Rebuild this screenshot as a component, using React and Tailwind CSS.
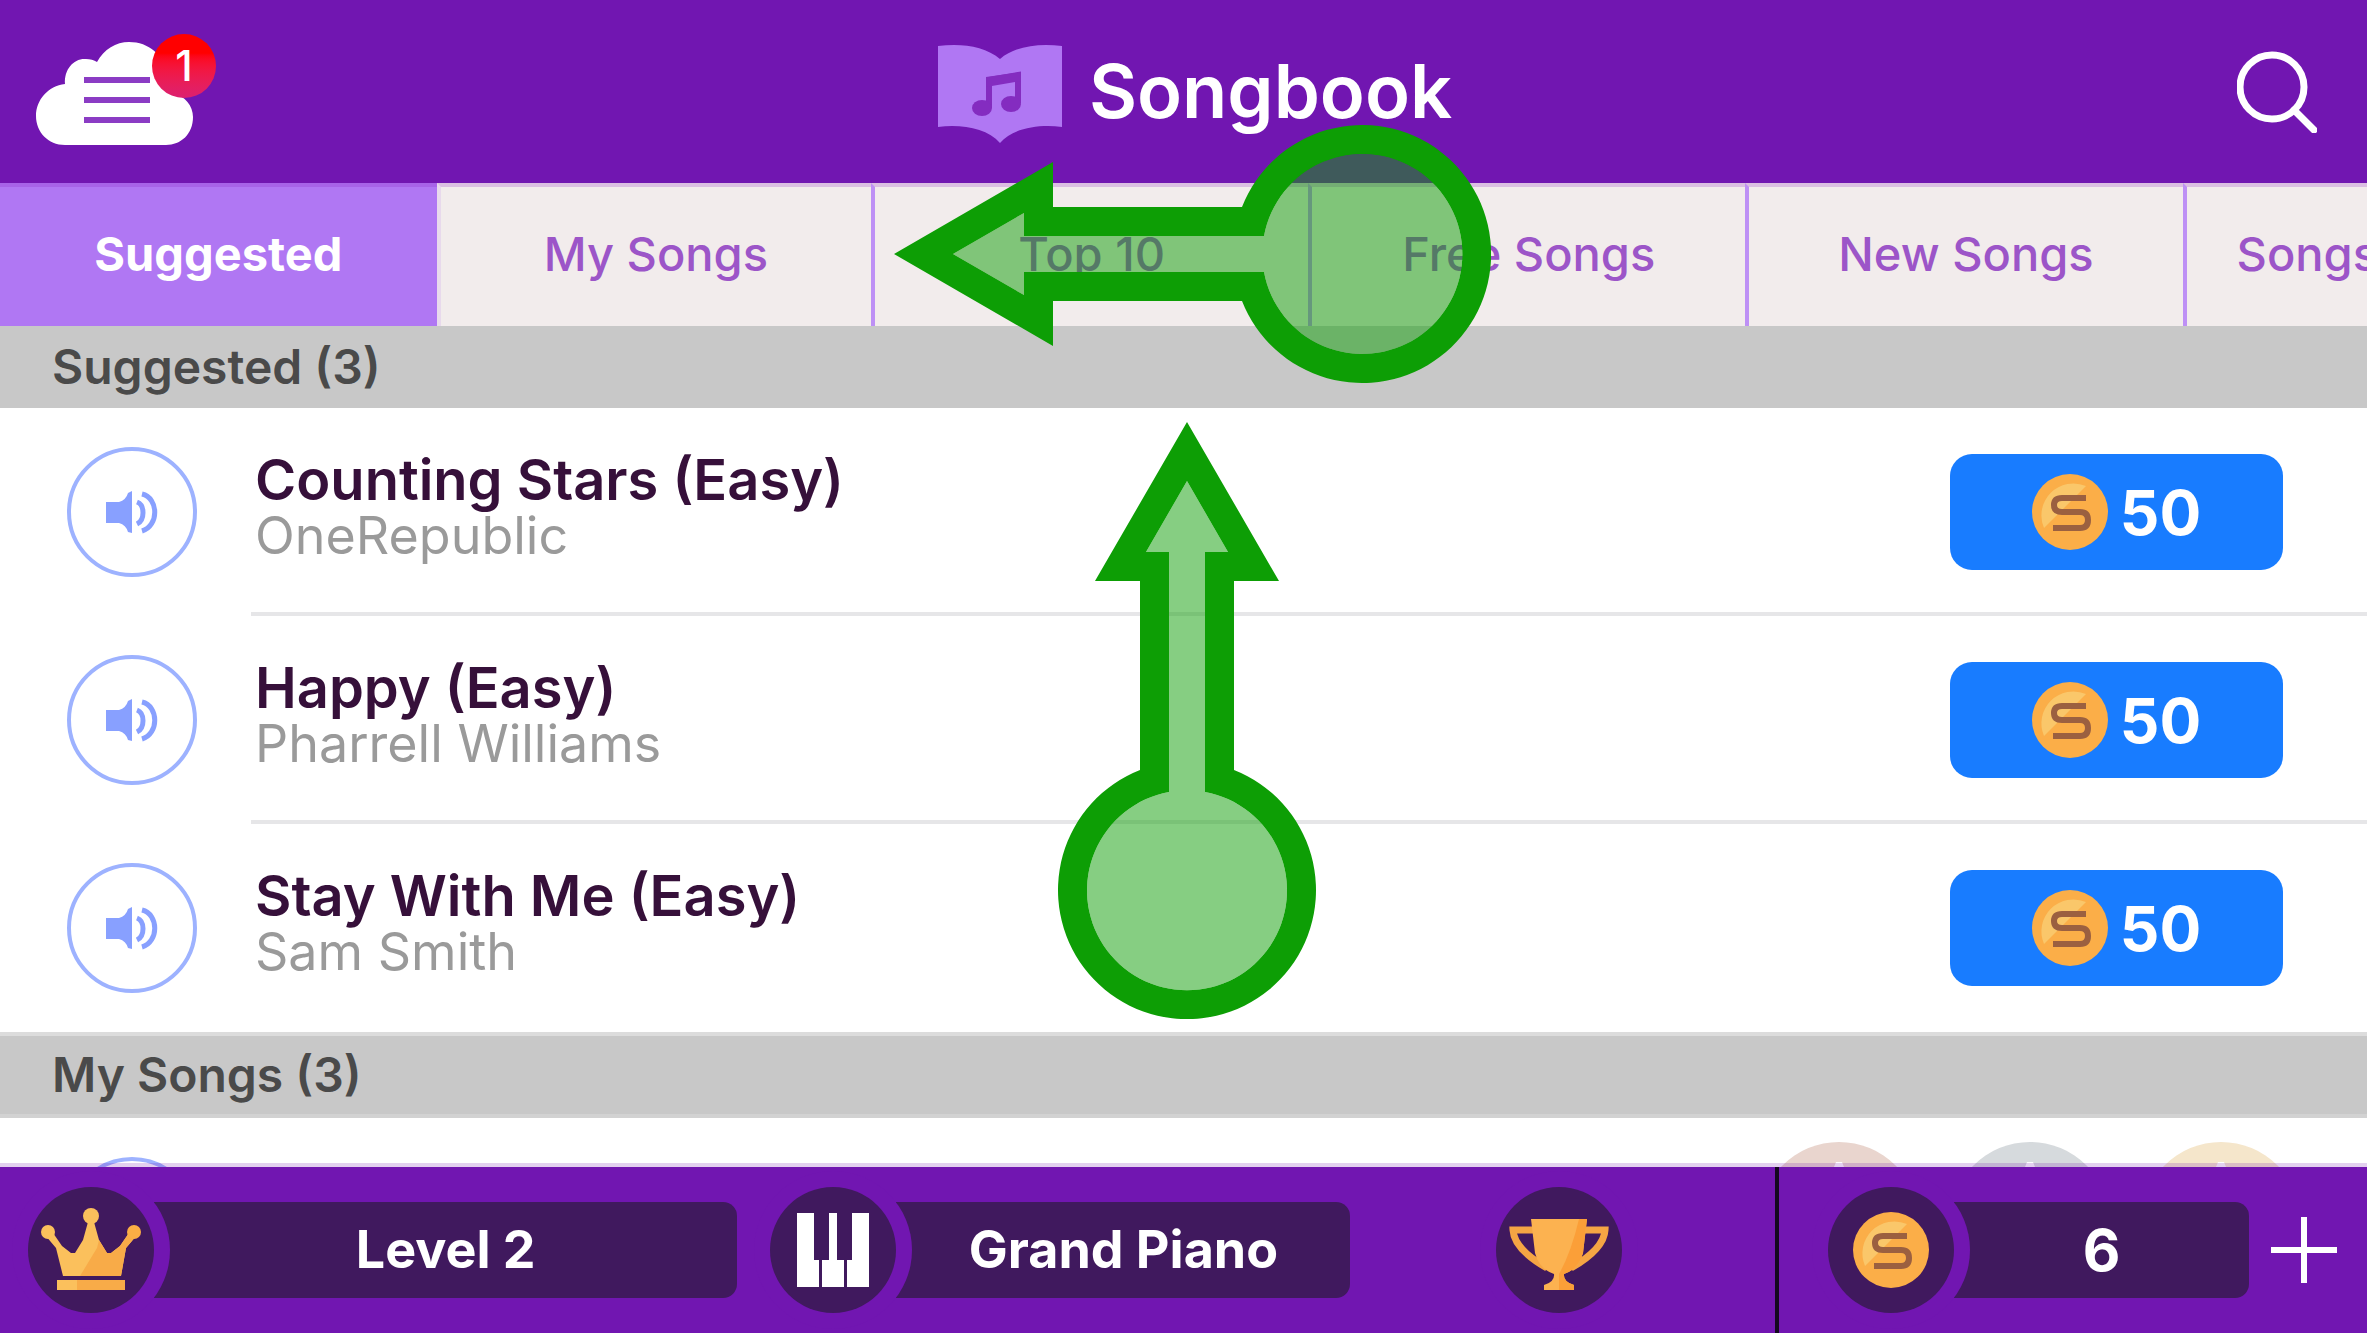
import React from "react";

const songs = [
  { title: "Counting Stars (Easy)", artist: "OneRepublic", price: 50 },
  { title: "Happy (Easy)", artist: "Pharrell Williams", price: 50 },
  { title: "Stay With Me (Easy)", artist: "Sam Smith", price: 50 },
];

const tabs = ["My Songs", "Top 10", "Free Songs", "New Songs"];

function Cloud() {
  return (
    <svg viewBox="0 0 158 104" className="h-[104px] w-[158px]" aria-hidden="true">
      <path
        d="M29 103C12 103 0 90 0 74C0 58 12 44 29 42C28 27 38 16 50 17C54 17 58 18 61 20C68 7 80 0 93 0C113 0 128 13 131 33C133 44 134 48 137 51C149 54 157 64 157 75C157 92 145 103 130 103Z"
        fill="#fff"
      />
      <path d="M48 38H114M48 58H114M48 78H114" stroke="#8b3cc4" strokeWidth="6" />
    </svg>
  );
}

function Book() {
  return (
    <svg viewBox="0 0 126 100" className="mt-1 h-[100px] w-[126px]" aria-hidden="true">
      <path
        d="M1 2C24 -1 48 2 63 15C78 2 102 -1 125 2V83C102 80 76 84 63 99C50 84 24 80 1 83Z"
        fill="#b077f3"
      />
      <path d="M52 64V36L81 31V59" fill="none" stroke="#842cc0" strokeWidth="6" />
      <path d="M49 33L84 28V37L49 43Z" fill="#842cc0" />
      <ellipse cx="45" cy="64" rx="10" ry="8" fill="#842cc0" />
      <ellipse cx="74" cy="60" rx="10" ry="8" fill="#842cc0" />
    </svg>
  );
}

function Magnifier() {
  return (
    <svg viewBox="0 0 80 82" className="h-[82px] w-[80px]" aria-hidden="true">
      <circle cx="35" cy="36" r="32" fill="none" stroke="#fff" strokeWidth="7" />
      <path d="M57 59L77 79" stroke="#fff" strokeWidth="7" strokeLinecap="round" />
    </svg>
  );
}

function Speaker() {
  return (
    <svg viewBox="0 0 56 44" className="h-[44px] w-[56px]" aria-hidden="true">
      <path d="M2 12H15Q22 10 24 3L28 1V43L24 42Q22 35 15 33H2Z" fill="#88a0ff" />
      <path
        d="M33 12C41 15 41 30 33 34M38 4C55 8 55 36 38 41"
        fill="none"
        stroke="#88a0ff"
        strokeWidth="5"
      />
    </svg>
  );
}

function Coin() {
  return (
    <svg viewBox="0 0 76 76" className="size-[76px] shrink-0" aria-hidden="true">
      <circle cx="38" cy="38" r="38" fill="#fbae48" />
      <path d="M12 54A32 32 0 0 1 54 12Z" fill="#fac76a" />
      <path
        d="M54 24H30Q22 24 22 31Q22 38 30 38H48Q56 38 56 46Q56 54 48 54H21"
        fill="none"
        stroke="#9b6040"
        strokeWidth="6"
      />
    </svg>
  );
}

function Crown() {
  return (
    <svg viewBox="0 0 104 84" className="h-[84px] w-[104px]" aria-hidden="true">
      <g fill="#fbc05c">
        <path d="M24 68L17 40L6 27L12 22L23 38L32 45H36L44 32L49 14H55L60 32L68 45H72L81 38L92 22L98 27L87 40L82 68Z" />
        <circle cx="9" cy="24" r="7" />
        <circle cx="52" cy="8" r="8" />
        <rect x="18" y="72" width="68" height="10" />
      </g>
      <path d="M60 32L68 45H72L81 38L92 22L98 27L87 40L82 68H41L58 40Z" fill="#f8ab48" />
      <circle cx="95" cy="24" r="7" fill="#fbae45" />
      <rect x="38" y="72" width="48" height="10" fill="#f8ab48" />
    </svg>
  );
}

function Keys() {
  return (
    <svg viewBox="0 0 72 76" className="h-[76px] w-[72px]" aria-hidden="true">
      <path
        d="M0 1H17V48H22V75H0ZM32 1H40V48H47V75H25V48H32ZM55 1H72V75H50V48H55Z"
        fill="#fff"
      />
    </svg>
  );
}

function Trophy() {
  return (
    <svg viewBox="0 0 100 86" className="h-[86px] w-[100px]" aria-hidden="true">
      <path
        d="M26 23H4Q5 42 38 61M74 23H96Q95 42 62 61"
        fill="none"
        stroke="#f5a544"
        strokeWidth="7"
      />
      <path
        d="M22 12H78L74 46Q70 62 55 67Q54 75 65 78V83H35V78Q46 75 45 67Q30 62 26 46Z"
        fill="#fcb250"
      />
      <path d="M70 12H78L74 46Q70 62 55 67Q54 75 65 78V83H50V67Q62 46 70 12Z" fill="#fb9f38" />
    </svg>
  );
}

function Plus() {
  return (
    <svg viewBox="0 0 66 66" className="size-[66px]" aria-hidden="true">
      <path d="M33 0V66M0 33H66" stroke="#fff" strokeWidth="6" />
    </svg>
  );
}

function Medal({ color }) {
  return (
    <svg viewBox="0 0 160 160" className="size-[160px]" aria-hidden="true">
      <circle cx="80" cy="80" r="80" fill={color} />
      <path
        d="M77 20H83L98 58L140 60L106 88L118 132L80 107L42 132L54 88L20 60L62 58Z"
        fill="#fff"
      />
    </svg>
  );
}

function SwipeShape() {
  return (
    <>
      <path
        d="M129 59L170 130H147V370A100 100 0 1 1 111 370V130H88Z"
        fill="#0d9e05"
        fillOpacity="0.5"
      />
      <path
        fillRule="evenodd"
        d="M129 0L221 159H176V348A129 129 0 1 1 82 348V159H37ZM129 59L88 130H111V370A100 100 0 1 0 147 370V130H170Z"
        fill="#0d9e05"
      />
    </>
  );
}

function PreviewButton({ label }) {
  return (
    <button
      aria-label={label}
      className="flex size-[130px] shrink-0 items-center justify-center rounded-full border-4 border-[#9db2ff]"
    >
      <Speaker />
    </button>
  );
}

function SectionTitle({ children }) {
  return (
    <h2 className="flex h-full items-center bg-[#c8c8c8] pl-[52px] text-[48px] font-semibold text-[#4a4a4a]">
      {children}
    </h2>
  );
}

function Badge({ children }) {
  return (
    <span className="relative z-10 flex size-[126px] shrink-0 items-center justify-center rounded-full bg-[#40195e] ring-[16px] ring-[#7116b1]">
      {children}
    </span>
  );
}

function Pill({ children }) {
  return (
    <span className="flex h-[96px] flex-1 items-center justify-center rounded-r-[14px] bg-[#40195e]">
      {children}
    </span>
  );
}

export default function App() {
  return (
    <div className="relative flex h-screen flex-col overflow-hidden bg-white font-['Inter',sans-serif]">
      <header className="grid h-[183px] shrink-0 grid-cols-[1fr_auto_1fr] items-center bg-[#7116b1] pr-[50px] pl-[36px]">
        <button aria-label="Menu" className="relative mt-1 justify-self-start">
          <Cloud />
          <span className="absolute -top-2 left-[116px] flex size-[64px] items-center justify-center rounded-full bg-linear-to-b from-[#ff0000] from-30% to-[#dc2070] text-[42px] leading-none font-medium text-white">
            1
          </span>
        </button>
        <div className="flex items-center gap-[26px] pl-9">
          <Book />
          <h1 className="text-[74px] font-semibold text-white">Songbook</h1>
        </div>
        <button aria-label="Search" className="justify-self-end">
          <Magnifier />
        </button>
      </header>

      <nav className="flex h-[143px] shrink-0 overflow-hidden text-[47px] font-medium">
        <button className="w-[18.45%] shrink-0 border-t-4 border-[#a763e8] bg-[#b077f3] pb-1 font-bold text-white">
          Suggested
        </button>
        {tabs.map((tab, i) => (
          <button
            key={tab}
            className={
              (i === 0
                ? "w-[18.35%] border-l-[#e8d9ec] "
                : "w-[18.47%] border-l-[#be90f5] ") +
              "shrink-0 border-t-4 border-l-4 border-t-[#dbbfe2] bg-[#f2ecec] pb-1 text-[#9c55c8]"
            }
          >
            {tab}
          </button>
        ))}
        <button className="w-[18.47%] shrink-0 border-t-4 border-l-4 border-t-[#dbbfe2] border-l-[#be90f5] bg-[#f2ecec] pb-1 pl-[50px] text-left text-[#9c55c8]">
          Songs
        </button>
      </nav>

      <main className="flex min-h-0 flex-1 flex-col overflow-hidden">
        <div className="h-[82px] shrink-0">
          <SectionTitle>Suggested (3)</SectionTitle>
        </div>
        <ul className="shrink-0">
          {songs.map((song, i) => (
            <li key={song.title} className="flex h-[208px] items-center pl-[67px]">
              <PreviewButton label={"Preview " + song.title} />
              <div
                className={
                  (i < songs.length - 1 ? "border-[#e6e6e8] " : "border-transparent ") +
                  "ml-[54px] flex h-full flex-1 items-center justify-between border-b-4 pt-1 pr-[84px] pl-[4px]"
                }
              >
                <div className="pb-2">
                  <h3 className="text-[56px] leading-[56px] font-semibold text-[#36103a]">
                    {song.title}
                  </h3>
                  <p className="text-[52px] leading-[56px] font-normal text-[#9a9a9a]">
                    {song.artist}
                  </p>
                </div>
                <button className="flex h-[116px] w-[333px] items-center justify-center gap-3 rounded-[22px] bg-[#187cff] text-[62px] font-bold text-white">
                  <Coin />
                  {song.price}
                </button>
              </div>
            </li>
          ))}
        </ul>
        <div className="h-[86px] shrink-0 border-y-4 border-t-[#dcdcdc] border-b-[#d2d2d2]">
          <SectionTitle>My Songs (3)</SectionTitle>
        </div>
        <div className="flex h-[208px] shrink-0 items-center justify-between pr-[66px] pl-[67px]">
          <PreviewButton label="Preview song" />
          <div className="flex gap-[31px]">
            <Medal color="#e9d5ce" />
            <Medal color="#d6dadd" />
            <Medal color="#f5e6cb" />
          </div>
        </div>
      </main>

      <footer className="relative flex h-[166px] shrink-0 items-stretch bg-[#7116b1] text-white">
        <div className="absolute inset-x-0 -top-1 h-1 bg-[#7116b1]/20" />
        <div className="flex flex-1 items-center gap-[33px] pl-[28px]">
          <button className="flex w-[40.6%] items-center text-[52px] font-bold">
            <Badge>
              <Crown />
            </Badge>
            <Pill>Level 2</Pill>
          </button>
          <button className="flex w-[33.2%] items-center text-[52px] font-bold">
            <Badge>
              <Keys />
            </Badge>
            <Pill>Grand Piano</Pill>
          </button>
          <div className="flex flex-1 justify-center pr-10">
            <button aria-label="Trophies" className="flex">
              <Badge>
                <Trophy />
              </Badge>
            </button>
          </div>
        </div>
        <div className="flex w-[25%] items-center border-l-4 border-[#140820] pr-[30px] pl-[49px]">
          <div className="flex flex-1 items-center text-[58px] font-bold">
            <Badge>
              <Coin />
            </Badge>
            <Pill>6</Pill>
          </div>
          <button aria-label="Add coins" className="ml-[22px]">
            <Plus />
          </button>
        </div>
      </footer>

      <svg
        viewBox="0 0 597 258"
        className="pointer-events-none absolute top-[125px] left-[calc(50%-290px)] h-[258px] w-[597px]"
        aria-hidden="true"
      >
        <g transform="translate(0 258) rotate(-90)">
          <SwipeShape />
        </g>
      </svg>
      <svg
        viewBox="0 0 258 597"
        className="pointer-events-none absolute top-[422px] left-[calc(50%-126px)] h-[597px] w-[258px]"
        aria-hidden="true"
      >
        <SwipeShape />
      </svg>
    </div>
  );
}
